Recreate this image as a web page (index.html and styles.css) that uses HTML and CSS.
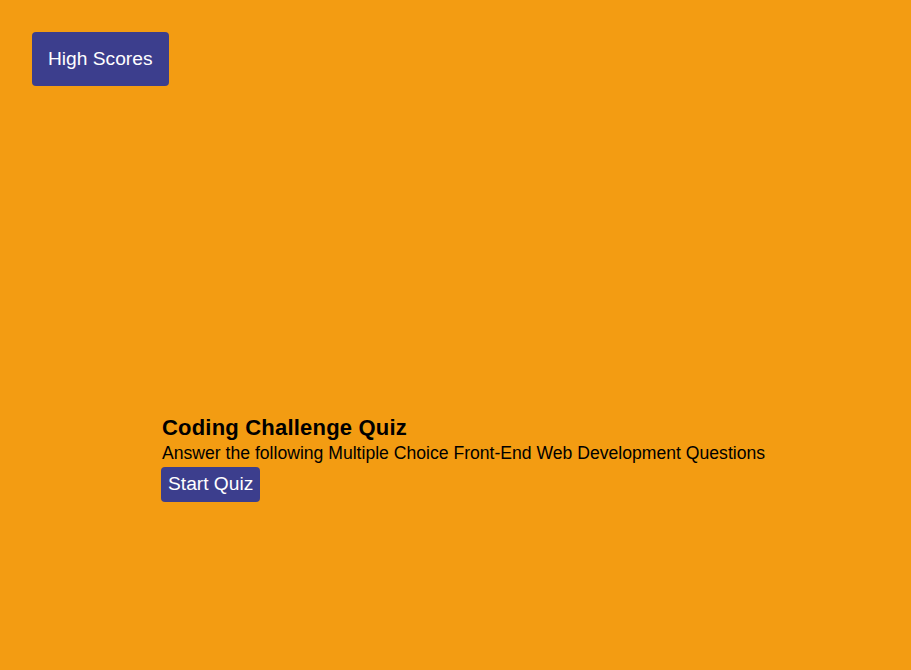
FILE: index.html
```html
<!DOCTYPE html>
<html>
<head>
<meta charset="utf-8">
<link rel="stylesheet" href="styles.css">
</head>
<body>
<header class="top">
  <button class="scores-btn">High Scores</button>
</header>
<main class="quiz">
  <h1 class="title">Coding Challenge Quiz</h1>
  <p class="intro">Answer the following Multiple Choice Front-End Web Development Questions</p>
  <button class="start-btn">Start Quiz</button>
</main>
</body>
</html>
```
FILE: styles.css
```css
html, body {
  margin: 0;
  padding: 0;
  background: #f39c12;
  height: 100%;
}
body {
  font-family: "Liberation Sans", Arial, sans-serif;
  color: #000;
}
.top {
  display: flex;
  padding: 32px 0 0 32px;
}
.scores-btn {
  font-family: "Liberation Sans", Arial, sans-serif;
  font-size: 19.2px;
  background: #3c3e8d;
  color: #fff;
  border: none;
  border-radius: 4px;
  padding: 16px 16px;
  line-height: 22px;
}
.quiz {
  display: flex;
  flex-direction: column;
  align-items: flex-start;
  padding: 329px 0 0 162px;
}
.title {
  margin: 0;
  font-size: 22px;
  line-height: 25px;
  letter-spacing: 0.2px;
  font-weight: bold;
}
.intro {
  margin: 3px 0 4px;
  font-size: 17.6px;
  line-height: 20px;
}
.start-btn {
  margin-left: -1px;
  font-family: "Liberation Sans", Arial, sans-serif;
  font-size: 19.2px;
  line-height: 22px;
  background: #3c3e8d;
  color: #fff;
  border: none;
  border-radius: 4px;
  padding: 6px 7px 7px;
}
```
